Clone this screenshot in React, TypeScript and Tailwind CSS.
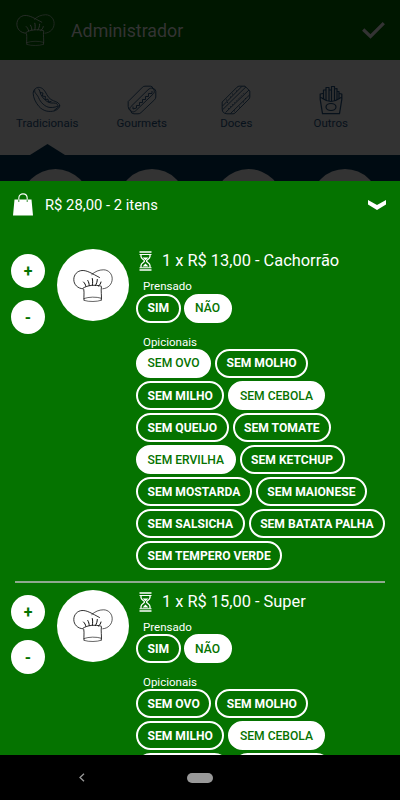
import { useState } from "react";
import clsx from "clsx";

const options = [
  "SEM OVO",
  "SEM MOLHO",
  "SEM MILHO",
  "SEM CEBOLA",
  "SEM QUEIJO",
  "SEM TOMATE",
  "SEM ERVILHA",
  "SEM KETCHUP",
  "SEM MOSTARDA",
  "SEM MAIONESE",
  "SEM SALSICHA",
  "SEM BATATA PALHA",
  "SEM TEMPERO VERDE",
];

const items = [
  { title: "1 x R$ 13,00 - Cachorrão", selected: ["SEM OVO", "SEM CEBOLA", "SEM ERVILHA"] },
  { title: "1 x R$ 15,00 - Super", selected: ["SEM CEBOLA"] },
];

function ChefHat({ className }: { className?: string }) {
  return (
    <svg viewBox="0 0 40 33" className={className} fill="none" stroke="currentColor" strokeLinecap="round">
      <path d="M10 19.8C4.500 19.500 .8 15.500 .8 10.500C.8 5.500 4.500 1.800 9 1.500C14 1.200 19 4.500 26.500 8.500" strokeWidth=".8" />
      <path d="M18.800 5.500C22 2.500 26 .8 30.500 .8C35.500 .8 39.200 4.800 39.200 9.800C39.200 15 35.500 19.300 29.800 19.800" strokeWidth=".65" />
      <path d="M10.300 19C14.500 16.200 22 15.400 28.200 17.200" strokeWidth=".8" />
      <path d="M10.800 20.500C11.400 24.500 10.600 27.500 11 31.200M28.400 18C27.600 22 29 27 28.300 31" strokeWidth=".8" />
      <path d="M11 29.500C16 27.800 23 27.600 28.300 29.200M11.500 31.500C16 33 24 32.800 28.200 31.300" strokeWidth=".6" />
      <path d="M10.500 13C11.800 14.200 12.500 15.600 12.800 17.200M14.800 11.500C15.800 13.200 16.200 14.800 16.200 16.500M19.300 9.500C19.800 11.800 19.800 14 19.300 16.200M24.300 10.500C24.200 12.800 23.600 14.500 22.500 16.400M28 13C27.600 14.700 26.800 16 25.500 17" strokeWidth=".95" />
    </svg>
  );
}

function HotDogIcon() {
  return (
    <svg viewBox="0 0 30 30" className="size-[30px]" fill="none" stroke="currentColor" strokeWidth=".9" strokeLinejoin="round">
      <path d="M3.500 3.500C5.500 1.800 9 2 11.500 4.500C14.500 7.500 15 12 19 14.500C22 16.500 26 16.500 27.500 19.500C28.500 22 26 24.500 22.500 25.800C17 27.500 11 26 7 21.500C3.500 17.500 1.300 12.500 1.200 8.500C1.200 6.500 2 4.500 3.500 3.500Z" />
      <path d="M3 4.500C1.500 7.500 5 9 6.500 12.500C8.500 17.500 13 22 18 22.500C21.500 22.800 25.500 21.500 28 20.500" />
      <path d="M6 3.500C8.500 5 7.500 8.500 10 11.500C13 15.500 16.500 18.500 21.500 18C24.500 18 25.800 19 25.500 20.500" />
      <path d="M8 7.500L11 8L10.300 11L13.500 11.500L13 14.500L16 14.200L16.500 17L19.500 16.300" />
      <path d="M22 25.500L26.500 22" />
    </svg>
  );
}

function GourmetIcon() {
  return (
    <svg viewBox="0 0 30 30" className="size-[30px]" fill="none" stroke="currentColor" strokeWidth=".9" strokeLinejoin="round">
      <path d="M1.200 21.500V16.500L15.500 2.200Q16.500 1.200 18 1.200H23.500Q25.500 1.200 26 3.500" />
      <path d="M1.200 21.500Q1.200 25 3.800 25.800Q4 28.800 7 28.800H11Q12.800 28.800 14 27.600L27.500 14.800Q28.800 13.500 28.800 12V6.500Q28.800 4 26 3.500" />
      <path d="M3.800 25.800C1.500 23.500 3.500 22 5 20.500L21 4.800C22.500 3.300 24.500 2.500 26 3.500M3.800 25.800C6 28 8 26.500 9.500 25L26 9.200C28 7.500 27.500 5 26 3.500" />
      <path d="M6 21.500V24L9.500 23V20.500L12.500 20.500V17.500L15.500 17.500V14.500L18.500 14.500V11.500L21.500 11.500V8.500L25 8.500V6" />
    </svg>
  );
}

function SweetIcon() {
  return (
    <svg viewBox="0 0 30 30" className="size-[30px]" fill="none" stroke="currentColor" strokeWidth=".9" strokeLinejoin="round">
      <path d="M1.200 17L16 2.200Q17 1.200 18.500 1.200H24L28.800 6V12Q28.800 13 28 14L14 28Q13.200 28.800 12 28.800H6Q1.200 28.500 1.200 24Z" />
      <path d="M1.500 21L20.800 1.500M1.800 24.500L25 1.800M4.500 27.500L28 5M9.500 28.500L28.500 10" />
      <path d="M5 15H6M9 12H10M11 9H12M15 6H16M6 17.500H7M13 26H14M18 22H19M22 17H23M24 13.500H25" />
      <path d="M7 24L24 7" strokeDasharray="1 2" />
    </svg>
  );
}

function FriesIcon() {
  return (
    <svg viewBox="0 0 30 30" className="size-[30px]" fill="none" stroke="currentColor" strokeWidth="1.200" strokeLinejoin="round">
      <path d="M7 8.500L4.200 9V14.500L6.500 28.700H23.500L25.800 14.500V9L23 8.500" />
      <path d="M4.200 12.500C7 12.500 8 16.500 15 16.500S23 12.500 25.800 12.500" />
      <path d="M7.500 14V5H10V15M10 7V2.500H13V16M13 5H15.500V16M15.500 5V1.500H18.500V16M18.500 4L21 3.500V15M21 6.500H23V13.500" />
      <ellipse cx="15" cy="22" rx="5" ry="3.500" />
    </svg>
  );
}

function Bag() {
  return (
    <svg viewBox="0 0 20 23" className="w-5 h-[23px]">
      <path d="M1.500 6.500H18.500L20 22.500H0Z" fill="currentColor" />
      <path d="M5.800 9V5.200C5.800 -.6 14.200 -.6 14.200 5.200V9" fill="none" stroke="currentColor" strokeWidth="1.100" />
      <path d="M5.800 6.500V9M14.200 6.500V9" stroke="#057300" strokeWidth=".8" />
    </svg>
  );
}

function Hourglass() {
  return (
    <svg viewBox="0 0 13 20" className="w-[13px] h-5 shrink-0" fill="none" stroke="currentColor">
      <path d="M.5 1H12.500M.5 19H12.500" strokeWidth="1.700" />
      <path d="M.5 3.500H12.500M.5 16.800H12.500" strokeWidth="1.100" />
      <path d="M2 3.500V5.500C2 8 5.500 8.700 5.500 10S2 12 2 14.500V16.500M11 3.500V5.500C11 8 7.500 8.700 7.500 10S11 12 11 14.500V16.500" strokeWidth="1.300" />
      <path d="M3.500 6.500H9.500L6.500 9.300ZM3.500 15.500L6.500 12.500L9.500 15.500Z" fill="currentColor" stroke="none" />
    </svg>
  );
}

const tabs = [
  { label: "Tradicionais", Icon: HotDogIcon },
  { label: "Gourmets", Icon: GourmetIcon },
  { label: "Doces", Icon: SweetIcon },
  { label: "Outros", Icon: FriesIcon },
];

function Chip({ label, active, onClick }: { label: string; active: boolean; onClick: () => void }) {
  return (
    <button
      onClick={onClick}
      className={clsx(
        "h-[29px] rounded-full border-2 border-white px-[9.5px] pt-px text-[12.100px] leading-none whitespace-nowrap",
        active ? "bg-white font-medium text-[#057300]" : "font-bold text-white"
      )}
    >
      {label}
    </button>
  );
}

function OrderItem({ title, selected }: { title: string; selected: string[] }) {
  const [pressed, setPressed] = useState(false);
  const [chosen, setChosen] = useState(selected);

  const toggle = (name: string) => {
    setChosen(chosen.includes(name) ? chosen.filter((c) => c !== name) : [...chosen, name]);
  };

  return (
    <div className="flex items-start">
      <div className="ml-[11px] mt-[5px] flex w-[34px] flex-col gap-[11.500px] text-[16px] font-bold text-[#057300]">
        <button className="size-[34px] rounded-full bg-white pt-[2px]">+</button>
        <button className="size-[34px] rounded-full bg-white pt-[2px]">-</button>
      </div>
      <div className="ml-[11.500px] flex size-[72px] shrink-0 items-center justify-center rounded-full bg-white text-black">
        <ChefHat className="h-[33px] w-10" />
      </div>
      <div className="ml-[7.500px] w-[254px] shrink-0">
        <div className="flex h-[24px] items-center pl-[3px]">
          <Hourglass />
          <span className="ml-[10px] pt-px text-[16.400px] whitespace-nowrap">{title}</span>
        </div>
        <p className="mt-[6px] h-[14px] pl-[7px] text-[11.500px] leading-[14px]">Prensado</p>
        <div className="mt-[.5px] flex gap-[3px]">
          <Chip label="SIM" active={pressed} onClick={() => setPressed(true)} />
          <Chip label="NÃO" active={!pressed} onClick={() => setPressed(false)} />
        </div>
        <p className="mt-3 h-[14px] pl-[7px] text-[11.500px] leading-[14px]">Opicionais</p>
        <div className="flex flex-wrap gap-x-1 gap-y-[3.100px]">
          {options.map((name) => (
            <Chip key={name} label={name} active={chosen.includes(name)} onClick={() => toggle(name)} />
          ))}
        </div>
      </div>
    </div>
  );
}

export default function App() {
  return (
    <div className="flex h-[800px] w-[400px] flex-col overflow-hidden bg-[#333333] font-['Roboto',sans-serif]">
      {/* Header */}
      <header className="flex h-[60px] shrink-0 items-center bg-[#001700] text-[#333333]">
        <ChefHat className="ml-4 h-8 w-[39px]" />
        <h1 className="ml-4 pt-[2px] text-[17.800px]">Administrador</h1>
        <svg viewBox="0 0 23 17" className="mr-[15px] ml-auto h-[17px] w-[23px]" fill="none" stroke="currentColor" strokeWidth="3.200">
          <path d="M1.200 7.500L8.500 14.500L21.800 1.200" />
        </svg>
      </header>

      {/* Categories */}
      <nav className="grid h-[84px] shrink-0 grid-cols-4 pr-[22px] pt-[25px] text-[#07111b]">
        {tabs.map(({ label, Icon }) => (
          <div key={label} className="flex flex-col items-center">
            <Icon />
            <span className="text-[11.500px] leading-4">{label}</span>
          </div>
        ))}
      </nav>
      <div className="h-[11px] shrink-0 pl-[30px]">
        <svg viewBox="0 0 35 11" className="h-[11px] w-[35px] text-[#000b12]">
          <path d="M0 11L17.500 0L35 11Z" fill="currentColor" />
        </svg>
      </div>
      <div className="flex h-[26px] shrink-0 gap-7 overflow-hidden bg-[#000b12] pt-[14px] pl-[21px]">
        {tabs.map(({ label }) => (
          <div key={label} className="size-[68.500px] shrink-0 rounded-full bg-[#333333]" />
        ))}
      </div>

      {/* Cart sheet */}
      <section className="h-[574px] shrink-0 overflow-hidden bg-[#057300] text-white">
        <div className="flex h-[47px] items-center pr-[14px] pl-[13px]">
          <Bag />
          <span className="ml-3 pt-px text-[14.800px]">R$ 28,00 - 2 itens</span>
          <svg viewBox="0 0 18 10" className="ml-auto h-[10px] w-[18px]" fill="currentColor">
            <path d="M0 0L9 5L18 0V4.500L9 10L0 4.500Z" />
          </svg>
        </div>
        <div className="pt-[21px]">
          <OrderItem {...items[0]} />
          <hr className="mx-[15px] mt-[11px] mb-[6.500px] border-t-2 border-[#8fa98f]" />
          <OrderItem {...items[1]} />
        </div>
      </section>

      {/* System navigation */}
      <footer className="flex h-[45px] shrink-0 items-center bg-black pl-[79px]">
        <svg viewBox="0 0 6 9" className="h-[9px] w-[6px]" fill="none" stroke="#999999" strokeWidth="1.300">
          <path d="M5 .7L1 4.500L5 8.300" />
        </svg>
        <div className="ml-[102px] h-[10px] w-[26px] rounded-full bg-[#999999]" />
      </footer>
    </div>
  );
}
